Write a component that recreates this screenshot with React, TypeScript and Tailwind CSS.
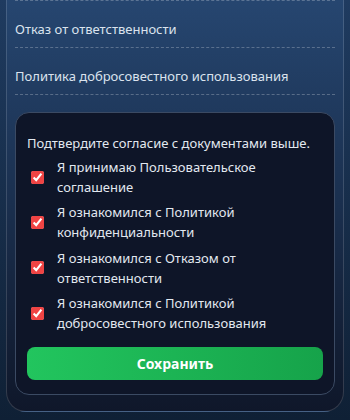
import { useState } from "react";

const docs = [
  "Я принимаю Пользовательское соглашение",
  "Я ознакомился с Политикой конфиденциальности",
  "Я ознакомился с Отказом от ответственности",
  "Я ознакомился с Политикой добросовестного использования",
];

export default function App() {
  const [checked, setChecked] = useState<boolean[]>([true, true, true, true]);

  const toggle = (i: number) =>
    setChecked((prev) => prev.map((v, idx) => (idx === i ? !v : v)));

  return (
    <div
      className="min-h-[420px] w-[350px] bg-gradient-to-b from-[#1f3b60] to-[#0f2035] px-[6px] pb-[8px]"
      style={{ fontFamily: '"Noto Sans", "Open Sans", sans-serif' }}
    >
      <div className="rounded-b-[20px] border border-t-0 border-white/15 bg-gradient-to-b from-[#264670] via-[#1a2f4e] to-[#0f172a] px-[8px] pb-[16px]">
        {/* Documents list */}
        <div className="border-t border-dashed border-white/25">
          {["Отказ от ответственности", "Политика добросовестного использования"].map((t) => (
            <div
              key={t}
              className="border-b border-dashed border-white/25 pt-[18px] pb-[8px] text-[13px] leading-[20px] text-[#dbe3ee]"
            >
              {t}
            </div>
          ))}
        </div>

        {/* Consent card */}
        <div className="mt-[17px] rounded-[14px] border border-[#3b4a63] bg-[#0e1528] px-[11px] pt-[20px] pb-[14px]">
          <p className="text-[13px] leading-[20px] text-[#e2e8f0]">
            Подтвердите согласие с документами выше.
          </p>
          <div className="mt-[4px] flex flex-col gap-[5.4px]">
            {docs.map((d, i) => (
              <label key={d} className="flex cursor-pointer items-center gap-[13px] pl-[4px]">
                <input
                  type="checkbox"
                  checked={checked[i]}
                  onChange={() => toggle(i)}
                  className="h-[13px] w-[13px] shrink-0 accent-[#ef4444]"
                />
                <span className="text-[13px] leading-[20px] text-[#e2e8f0]">{d}</span>
              </label>
            ))}
          </div>
          <button className="mt-[14px] h-[33px] w-full rounded-[8px] bg-gradient-to-r from-[#22c55e] to-[#16a34a] text-[14px] font-bold text-white">
            Сохранить
          </button>
        </div>
      </div>
    </div>
  );
}
